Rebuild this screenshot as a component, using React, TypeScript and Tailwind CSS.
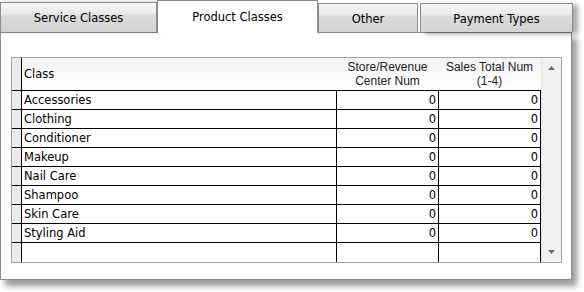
import React from "react";

const rows = [
  "Accessories",
  "Clothing",
  "Conditioner",
  "Makeup",
  "Nail Care",
  "Shampoo",
  "Skin Care",
  "Styling Aid",
];

const tabBg =
  "bg-[linear-gradient(to_bottom,#f6f6f6_0%,#ebebeb_35%,#dadada_45%,#d3d3d3_100%)]";

export default function App() {
  return (
    <div className="w-[584px] h-[292px] bg-white font-['DejaVu_Sans',sans-serif] text-[11.5px] text-black">
      {/* tabs */}
      <div className="flex items-end h-[32px]">
        <div
          className={`w-[157px] h-[30px] border border-b-0 border-[#8c8c94] ${tabBg} flex items-center justify-center pt-[3px] shadow-[3px_0_4px_rgba(0,0,0,0.25)]`}
        >
          Service Classes
        </div>
        <div className="relative z-10 w-[161px] h-[33px] -mb-px border border-b-0 border-[#8c8c94] bg-white flex items-start justify-center pt-[8px]">
          Product Classes
        </div>
        <div
          className={`w-[100px] h-[29px] border border-b-0 border-[#8c8c94] ${tabBg} flex items-center justify-center pt-[3px]`}
        >
          Other
        </div>
        <div
          className={`ml-[2px] w-[153px] h-[29px] border border-b-0 border-[#8c8c94] ${tabBg} flex items-center justify-center pt-[3px] shadow-[5px_2px_5px_rgba(0,0,0,0.35)]`}
        >
          Payment Types
        </div>
      </div>

      {/* panel */}
      <div className="w-[572px] h-[248px] border border-[#8c8c94] bg-white pt-[24px] pl-[10px] shadow-[5px_6px_6px_rgba(0,0,0,0.4)]">
        <div className="w-[551px] h-[206px] border border-[#a3a3a3] flex">
          <div className="w-[529px] flex flex-col">
            {/* header */}
            <div className="flex h-[33px] border-b border-black bg-[linear-gradient(to_bottom,#f3f3f3,#ffffff)]">
              <div className="w-[9px] bg-[#ebebeb]" />
              <div className="w-[315px] border-l border-black flex items-center pl-[2px] pt-[2px]">
                Class
              </div>
              <div className="w-[102px] flex flex-col items-center justify-center font-['Liberation_Sans',sans-serif] text-[12px] leading-[14px] text-[#222] pl-[1px]">
                <span>Store/Revenue</span>
                <span>Center Num</span>
              </div>
              <div className="w-[102px] flex flex-col items-center justify-center font-['Liberation_Sans',sans-serif] text-[12px] leading-[14px] text-[#222] pl-[1px]">
                <span>Sales Total Num</span>
                <span>(1-4)</span>
              </div>
              <div className="w-[1px]" />
            </div>

            {rows.map((name) => (
              <div key={name} className="flex h-[19px] border-b border-black">
                <div className="w-[9px] bg-[#ebebeb]" />
                <div className="w-[315px] border-l border-black pl-[2px] leading-[19px]">
                  {name}
                </div>
                <div className="w-[102px] border-l border-black pr-[2px] text-right leading-[19px]">
                  0
                </div>
                <div className="w-[102px] border-l border-black pr-[2px] text-right leading-[19px]">
                  0
                </div>
                <div className="w-[1px] bg-black" />
              </div>
            ))}

            <div className="flex h-[19px]">
              <div className="w-[9px] bg-[#ebebeb]" />
              <div className="w-[315px] border-l border-black" />
              <div className="w-[102px] border-l border-black" />
              <div className="w-[102px] border-l border-black" />
              <div className="w-[1px] bg-black" />
            </div>
          </div>

          {/* scrollbar */}
          <div className="w-[20px] bg-[#f0f0f0] border-l border-[#e4e4e4] flex flex-col items-center justify-between py-[8px]">
            <svg width="7" height="4" viewBox="0 0 7 4">
              <path d="M0 4 L3.5 0 L7 4 Z" fill="#6a6a6a" />
            </svg>
            <svg width="7" height="4" viewBox="0 0 7 4">
              <path d="M0 0 L3.5 4 L7 0 Z" fill="#6a6a6a" />
            </svg>
          </div>
        </div>
      </div>
    </div>
  );
}
